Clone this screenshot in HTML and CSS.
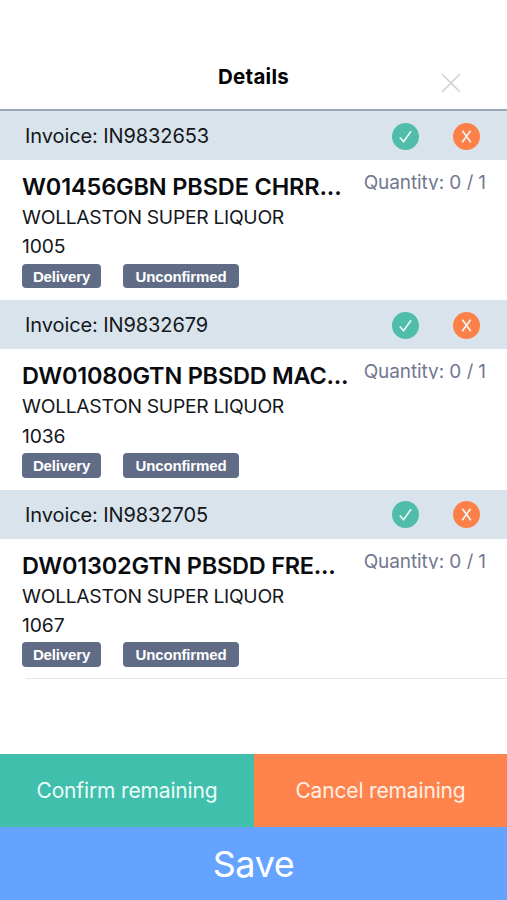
FILE: index.html
```html
<!DOCTYPE html>
<html lang="en">
<head>
<meta charset="utf-8">
<title>Details</title>
<link rel="stylesheet" href="styles.css">
</head>
<body>
<svg class="sprite" aria-hidden="true">
  <symbol id="check" viewBox="0 0 27 27"><path d="M7.8 14.4 11.6 18.8 19 8.2"/></symbol>
  <symbol id="cross" viewBox="0 0 27 27"><path d="M9.4 7.8 17.8 19.2M17.6 7.8 9.2 19.2"/></symbol>
</svg>
<div class="screen">
  <header class="top">
    <h1 class="title">Details</h1>
    <svg class="close" viewBox="0 0 20 20"><path d="M1.2 1.2 18.8 18.8M18.8 1.2 1.2 18.8"/></svg>
  </header>
  <main class="list">
    <section class="group">
      <div class="invoice"><span class="number">Invoice: IN9832653</span>
        <svg class="action confirm"><use href="#check"/></svg><svg class="action cancel"><use href="#cross"/></svg></div>
      <div class="item">
        <div class="info"><h2 class="name n1">W01456GBN PBSDE CHRR...</h2>
          <p class="line">WOLLASTON SUPER LIQUOR</p><p class="line code">1005</p>
          <div class="tags"><span class="tag delivery">Delivery</span><span class="tag status">Unconfirmed</span></div></div>
        <div class="quantity">Quantity: 0 / 1</div>
      </div>
    </section>
    <section class="group">
      <div class="invoice"><span class="number">Invoice: IN9832679</span>
        <svg class="action confirm"><use href="#check"/></svg><svg class="action cancel"><use href="#cross"/></svg></div>
      <div class="item">
        <div class="info"><h2 class="name n2">DW01080GTN PBSDD MAC...</h2>
          <p class="line">WOLLASTON SUPER LIQUOR</p><p class="line code">1036</p>
          <div class="tags"><span class="tag delivery">Delivery</span><span class="tag status">Unconfirmed</span></div></div>
        <div class="quantity">Quantity: 0 / 1</div>
      </div>
    </section>
    <section class="group">
      <div class="invoice"><span class="number">Invoice: IN9832705</span>
        <svg class="action confirm"><use href="#check"/></svg><svg class="action cancel"><use href="#cross"/></svg></div>
      <div class="item">
        <div class="info"><h2 class="name n3">DW01302GTN PBSDD FRE...</h2>
          <p class="line">WOLLASTON SUPER LIQUOR</p><p class="line code">1067</p>
          <div class="tags"><span class="tag delivery">Delivery</span><span class="tag status">Unconfirmed</span></div></div>
        <div class="quantity">Quantity: 0 / 1</div>
      </div>
    </section>
  </main>
  <footer class="footer">
    <div class="pair"><button class="btn confirm-all">Confirm remaining</button><button class="btn cancel-all">Cancel remaining</button></div>
    <button class="btn save">Save</button>
  </footer>
</div>
</body>
</html>
```
FILE: styles.css
```css
* { box-sizing: border-box; margin: 0; padding: 0; }
body { background: #fff; color: #14171c; font-family: Inter, "Liberation Sans", sans-serif; }
.sprite { display: none; }
.screen { width: 507px; height: 900px; display: flex; flex-direction: column; overflow: hidden; }
.top { height: 111px; border-bottom: 2px solid #98a6b5; display: grid; grid-template-columns: 1fr auto 1fr; align-items: start; flex: none; }
.title { grid-column: 2; margin-top: 63px; font-size: 20.5px; line-height: 28px; font-weight: 650; color: #000; letter-spacing: 0.3px; }
.close { width: 20px; height: 20px; margin: 73px 0 0 152px; fill: none; stroke: #cdd0d7; stroke-width: 1.6; }
.list { flex: 1; }
.group { height: 189.4px; }
.invoice { height: 49px; padding: 1px 27px 0 25px; background: #d9e3eb; display: flex; align-items: center; }
.number { flex: 1; font-size: 20px; line-height: 28px; letter-spacing: -0.09px; white-space: nowrap; }
.action { width: 27px; height: 27px; border-radius: 50%; fill: none; stroke: #effaf8; stroke-width: 1.6; }
.confirm { background: #50bdaa; margin-right: 34px; }
.cancel { background: #fd8049; }
.item { display: flex; justify-content: space-between; padding: 10px 21px 0 22px; }
.name { font-size: 23.5px; line-height: 34px; font-weight: 600; color: #090b0f; white-space: nowrap; }
.n1 { letter-spacing: -0.14px; }
.n2, .n3 { letter-spacing: -0.23px; }
.info { width: 330px; }
.line { font-size: 19.3px; line-height: 29.4px; letter-spacing: -0.3px; white-space: nowrap; margin-top: -1px; }
.code { margin-top: 0; letter-spacing: -0.1px; }
.tags { display: flex; gap: 22px; margin-top: 1.8px; }
.tag { height: 24.5px; border-radius: 4px; background: #606c86; color: #fff; font: bold 15px/25px "Liberation Sans", sans-serif; text-align: center; letter-spacing: -0.15px; }
.delivery { width: 79px; }
.status { width: 116px; }
.quantity { height: 20px; overflow: hidden; font-size: 19px; line-height: 26px; letter-spacing: -0.1px; color: #727890; white-space: nowrap; }
.group:last-child::after { content: ""; display: block; height: 1px; margin: 11px 0 0 26px; background: #e3e4e6; }
.footer { flex: none; }
.pair { display: grid; grid-template-columns: 254px 1fr; height: 73px; }
.btn { border: 0; color: #fff; font-family: inherit; font-size: 21px; letter-spacing: -0.15px; display: flex; align-items: center; justify-content: center; }
.confirm-all { background: #3fbfac; color: #ecfcf8; }
.cancel-all { background: #ff834c; color: #fff0e6; }
.save { width: 100%; height: 73.5px; background: #64a3ff; font-size: 36px; letter-spacing: -0.4px; padding-top: 2px; }
```
